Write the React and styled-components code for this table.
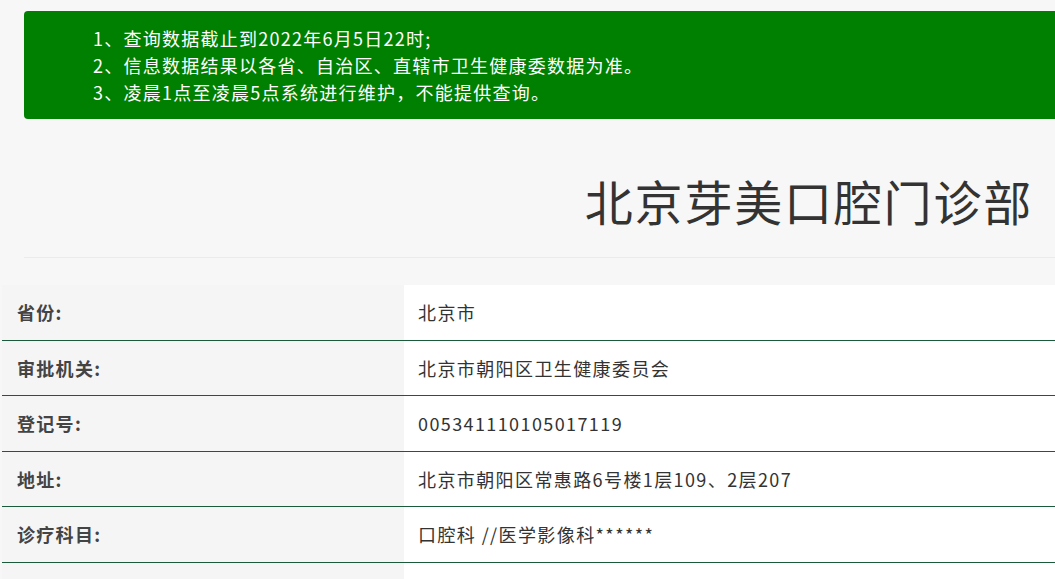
import styled, { createGlobalStyle } from 'styled-components';

const GlobalStyle = createGlobalStyle`
  body {
    margin: 0;
    background: #f7f7f7;
    font-family: "Noto Sans CJK SC", "Noto Sans", sans-serif;
    overflow: hidden;
  }
`;

const rows = [
  ['省份:', '北京市'],
  ['审批机关:', '北京市朝阳区卫生健康委员会'],
  ['登记号:', '005341110105017119'],
  ['地址:', '北京市朝阳区常惠路6号楼1层109、2层207'],
  ['诊疗科目:', '口腔科 //医学影像科******'],
  ['', ''],
];

const App = () => {
  return (
    <Page>
      <GlobalStyle />
      <Notice>
        <p>1、查询数据截止到2022年6月5日22时;</p>
        <p>2、信息数据结果以各省、自治区、直辖市卫生健康委数据为准。</p>
        <p>3、凌晨1点至凌晨5点系统进行维护，不能提供查询。</p>
      </Notice>
      <Title>北京芽美口腔门诊部</Title>
      <Divider />
      <Table>
        {rows.map(([label, value], i) => (
          <Row key={i}>
            <Label>{label}</Label>
            <Value>{value}</Value>
          </Row>
        ))}
      </Table>
    </Page>
  );
};

const Page = styled.div`
  width: 1055px;
  height: 579px;
  overflow: hidden;
  padding-top: 11px;
  box-sizing: border-box;
`;

const Notice = styled.div`
  margin-left: 24px;
  height: 108px;
  box-sizing: border-box;
  padding: 14px 0 0 69px;
  background: #008000;
  border-radius: 4px 0 0 4px;
  color: #fff;
  font-size: 18px;
  letter-spacing: 1.25px;
  line-height: 27px;

  p {
    margin: 0;
    white-space: nowrap;
  }
`;

const Title = styled.h1`
  margin: 0;
  height: 125px;
  display: flex;
  align-items: center;
  justify-content: flex-end;
  padding: 36px 22px 0 0;
  box-sizing: border-box;
  font-size: 48px;
  font-weight: normal;
  color: #333;
  letter-spacing: 1.8px;
`;

const Divider = styled.div`
  margin-left: 24px;
  border-top: 1px solid #ebebeb;
  height: 0;
  margin-top: 13px;
  margin-bottom: 27px;
`;

const Table = styled.div`
  margin-left: 2px;
  display: flex;
  flex-direction: column;
`;

const Row = styled.div`
  display: grid;
  grid-template-columns: 402px 1fr;
  height: 55.5px;
  box-sizing: border-box;
  border-bottom: 1px solid #1c5a3c;
`;

const Label = styled.div`
  background: #f5f5f5;
  display: flex;
  align-items: center;
  padding-left: 15px;
  font-size: 18px;
  letter-spacing: 1.3px;
  font-weight: bold;
  color: #444;
`;

const Value = styled.div`
  background: #fff;
  display: flex;
  align-items: center;
  padding-left: 14px;
  font-size: 18px;
  letter-spacing: 1.4px;
  color: #333;
  white-space: nowrap;
`;

export default App;
